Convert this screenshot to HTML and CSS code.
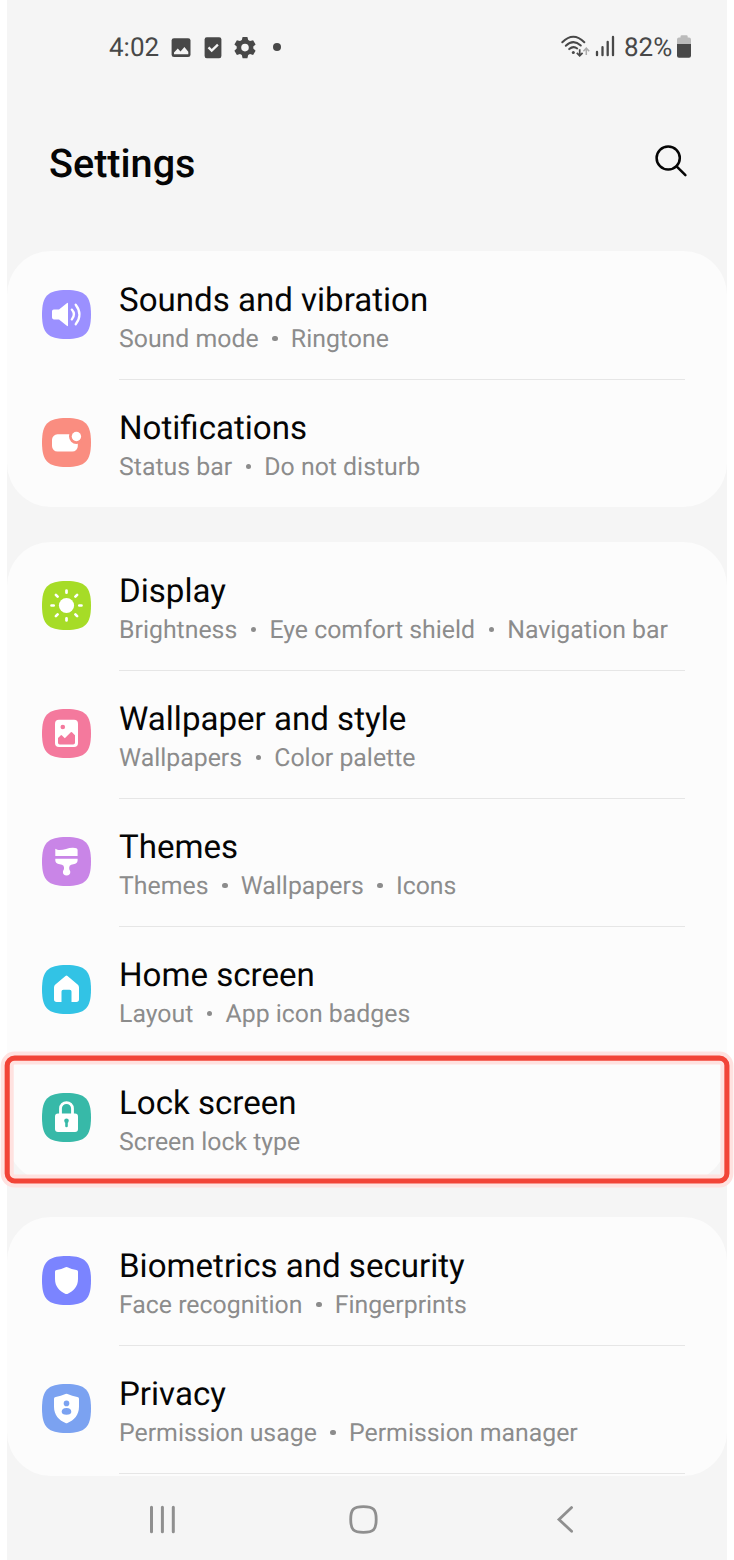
FILE: index.html
```html
<!DOCTYPE html>
<html lang="en">
<head>
<meta charset="utf-8">
<title>Settings</title>
<link rel="stylesheet" href="styles.css">
</head>
<body>
<svg class="defs" width="0" height="0" aria-hidden="true"><defs><path id="squircle" d="M0 24.5C0 6 6 0 24.5 0S49 6 49 24.5 43 49 24.5 49 0 43 0 24.5Z"/></defs></svg>
<div class="phone">
  <header class="status">
    <span class="clock">4:02</span>
    <svg class="status-left" width="116" height="30" viewBox="168 33 116 30">
      <rect x="171.6" y="38.2" width="18.9" height="18.9" rx="2.4" fill="#484848"/>
      <path d="M174 54.2V52.6L177.8 48.6 180.5 51.4 184.4 47 188.3 51.8V54.2Z" fill="#f5f5f5"/>
      <rect x="204.6" y="37.3" width="16.8" height="21" rx="2.2" fill="#484848"/>
      <path d="M208.5 47.4L211.7 50.6 217.9 44.6" fill="none" stroke="#f5f5f5" stroke-width="2.3"/>
      <path fill="#484848" fill-rule="evenodd" d="M242.6 37h4.8l.8 3.1 1.8 1 3.1-.9 2.5 4.2-2.3 2.2v2l2.3 2.2-2.5 4.2-3.1-.9-1.8 1-.8 3.2h-4.8l-.8-3.2-1.8-1-3.1.9-2.5-4.2 2.3-2.2v-2l-2.3-2.2 2.5-4.2 3.1.9 1.8-1ZM245 43.8a3.8 3.8 0 1 0 0 7.6 3.8 3.8 0 0 0 0-7.6Z"/>
      <circle cx="277" cy="47" r="4" fill="#484848"/>
    </svg>
    <svg class="status-net" width="58" height="30" viewBox="560 33 58 30" fill="none">
      <g stroke="#484848" stroke-width="2" stroke-linecap="round">
        <path d="M562.3 42.2Q573.3 31.2 584.3 42.2"/>
        <path d="M565.8 45.7Q573.3 38.6 580.8 45.5"/>
        <path d="M569.2 49.1Q573.3 45.5 577.2 48.5"/>
      </g>
      <circle cx="573.3" cy="52.4" r="1.5" fill="#484848"/>
      <path d="M579.7 49.2V55.6M576.8 52.9L579.7 55.9 582.6 52.9" stroke="#484848" stroke-width="1.7"/>
      <path d="M586.3 55V48.6M583.4 51.2L586.3 48.2 589.2 51.2" stroke="#aaa" stroke-width="1.5"/>
      <path d="M597 52V55.2M602.5 47.2V55.2M607.7 41.8V55.2M613 36.9V55.2" stroke="#484848" stroke-width="2.3" stroke-linecap="round"/>
    </svg>
    <span class="percent">82%</span>
    <svg class="battery" width="16" height="30" viewBox="676 33 16 30">
      <path d="M680.5 37.5v-1q0-1.3 1.3-1.3h4.6q1.3 0 1.3 1.3v1h1.3q2 0 2 2V44h-14v-4.5q0-2 2-2Z" fill="#bbb"/>
      <path d="M677 44h14v11.7q0 2-2 2h-10q-2 0-2-2Z" fill="#484848"/>
    </svg>
  </header>

  <div class="titlebar">
    <h1>Settings</h1>
    <svg width="36" height="36" viewBox="653 143 36 36" fill="none" stroke="#050505" stroke-width="2.5" stroke-linecap="round"><circle cx="668.2" cy="158" r="11.6"/><path d="M676.6 166.4L685.4 175.2"/></svg>
  </div>

  <main class="list">
    <section class="card">
      <div class="row">
        <svg class="icon" viewBox="0 0 49 49"><use href="#squircle" fill="#9b90ff"/><path d="M11.8 19.4H17L24.8 13.2Q26 12.3 26 13.8V35.2Q26 36.7 24.8 35.8L17 29.4H11.8Q10 29.4 10 27.6V21.2Q10 19.4 11.8 19.4Z" fill="#fff"/><path d="M29.8 19.6Q34.2 24.5 29.8 29.4M33.7 14.7Q41.2 24.5 33.7 34.3" fill="none" stroke="#fff" stroke-width="2.3" stroke-linecap="round"/></svg>
        <div class="text"><div class="name">Sounds and vibration</div><div class="sub"><span>Sound mode</span><i></i><span>Ringtone</span></div></div>
      </div>
      <div class="row">
        <svg class="icon" viewBox="0 0 49 49"><use href="#squircle" fill="#fa8d80"/><rect x="10" y="16.3" width="25.8" height="17.2" rx="5.5" fill="#fff"/><circle cx="34.4" cy="18.5" r="7.4" fill="#fa8d80"/><circle cx="34.4" cy="18.5" r="4.7" fill="#fff"/></svg>
        <div class="text"><div class="name">Notifications</div><div class="sub"><span>Status bar</span><i></i><span>Do not disturb</span></div></div>
      </div>
    </section>

    <section class="card">
      <div class="row">
        <svg class="icon" viewBox="0 0 49 49"><use href="#squircle" fill="#a6dc27"/><circle cx="24.5" cy="24.5" r="7.6" fill="#fff"/><path d="M24.5 9.5V11.7M24.5 37.3V39.5M9.5 24.5H11.7M37.3 24.5H39.5M13.9 13.9L15.6 15.6M33.4 33.4L35.1 35.1M13.9 35.1L15.6 33.4M33.4 15.6L35.1 13.9" stroke="#fff" stroke-width="2.7" stroke-linecap="round"/></svg>
        <div class="text"><div class="name">Display</div><div class="sub"><span>Brightness</span><i></i><span>Eye comfort shield</span><i></i><span>Navigation bar</span></div></div>
      </div>
      <div class="row">
        <svg class="icon" viewBox="0 0 49 49"><use href="#squircle" fill="#f4799d"/><rect x="13" y="10.7" width="23" height="27.2" rx="4" fill="#fff"/><circle cx="20.8" cy="18" r="2.3" fill="#f4799d"/><path d="M16 29L18.6 26.4Q19.3 25.7 20 26.4L22.8 29.2 28.8 23.2Q29.4 22.6 30 23.2L33 26.2V33.8Q33 35.6 31.2 35.6H17.8Q16 35.6 16 33.8Z" fill="#f4799d"/></svg>
        <div class="text"><div class="name">Wallpaper and style</div><div class="sub"><span>Wallpapers</span><i></i><span>Color palette</span></div></div>
      </div>
      <div class="row">
        <svg class="icon" viewBox="0 0 49 49"><use href="#squircle" fill="#c985e7"/><path d="M13.3 19V11.8C18.5 15.2 25 10.5 31 10.7Q35.6 10.8 35.6 13V19Z" fill="#fff"/><path d="M13.3 21.8H35.6V23.6Q35.4 26.4 32.4 27L29.2 27.7Q27.2 28.4 27.2 30.5V31.5C27.2 33 28.3 33.6 28.3 35.1A3.6 3.4 0 0 1 20.9 35.1C20.9 33.6 22 33 22 31.5V30.5Q22 28.4 20 27.7L16.6 27Q13.5 26.4 13.3 23.6Z" fill="#fff"/></svg>
        <div class="text"><div class="name">Themes</div><div class="sub"><span>Themes</span><i></i><span>Wallpapers</span><i></i><span>Icons</span></div></div>
      </div>
      <div class="row">
        <svg class="icon" viewBox="0 0 49 49"><use href="#squircle" fill="#32c3e5"/><path d="M23.5 11.1Q24.5 10.1 25.5 11.1L35.6 19.5Q37 20.7 37 22.5V34.3Q37 37 34.3 37H29.5V26.6Q29.5 24.7 27.6 24.7H21.4Q19.5 24.7 19.5 26.6V37H14.7Q12 37 12 34.3V22.5Q12 20.7 13.4 19.5Z" fill="#fff"/></svg>
        <div class="text"><div class="name">Home screen</div><div class="sub"><span>Layout</span><i></i><span>App icon badges</span></div></div>
      </div>
      <div class="row selected">
        <svg class="icon" viewBox="0 0 49 49"><use href="#squircle" fill="#37b9a8"/><rect x="13" y="20.4" width="23" height="18.7" rx="3" fill="#fff"/><path d="M18.5 22V15.6A6 6 0 0 1 30.5 15.6V22" fill="none" stroke="#fff" stroke-width="2.8"/><circle cx="24.5" cy="27.7" r="2.3" fill="#37b9a8"/><path d="M24.5 28V33" stroke="#37b9a8" stroke-width="2.6" stroke-linecap="round"/></svg>
        <div class="text"><div class="name">Lock screen</div><div class="sub"><span>Screen lock type</span></div></div>
        <svg class="outline" width="734" height="138" viewBox="0 1050 734 138" fill="none"><rect x="7.2" y="1058.1" width="719.7" height="122.9" rx="7.5" stroke="#ffe2e0" stroke-width="13"/><rect x="7.2" y="1058.1" width="719.7" height="122.9" rx="7.5" stroke="#f24437" stroke-width="5.1"/></svg>
      </div>
    </section>

    <section class="card clipped">
      <div class="row">
        <svg class="icon" viewBox="0 0 49 49"><use href="#squircle" fill="#7b84ff"/><path d="M23.6 11.3Q24.5 10.8 25.4 11.3 29.6 13.4 34.4 13.9 36 14.1 36 15.7V23C36 30.5 31.5 35.3 25.4 37.9Q24.5 38.3 23.6 37.9C17.5 35.3 13 30.5 13 23V15.7Q13 14.1 14.6 13.9 19.4 13.4 23.6 11.3Z" fill="#fff"/></svg>
        <div class="text"><div class="name">Biometrics and security</div><div class="sub"><span>Face recognition</span><i></i><span>Fingerprints</span></div></div>
      </div>
      <div class="row">
        <svg class="icon" viewBox="0 0 49 49"><use href="#squircle" fill="#7ba2f1"/><path d="M23.5 10.1Q24.5 9.6 25.5 10.1 30.1 12.4 35.3 12.9 37 13.1 37 14.8V22.8C37 31 32.1 36.2 25.5 39Q24.5 39.4 23.5 39C16.9 36.2 12 31 12 22.8V14.8Q12 13.1 13.7 12.9 18.9 12.4 23.5 10.1Z" fill="#fff"/><circle cx="24.5" cy="19.4" r="2.8" fill="#7ba2f1"/><path d="M19.7 27.8Q19.7 24 24.5 24T29.3 27.8Q29.3 30.7 24.5 30.7T19.7 27.8Z" fill="#7ba2f1"/></svg>
        <div class="text"><div class="name">Privacy</div><div class="sub"><span>Permission usage</span><i></i><span>Permission manager</span></div></div>
      </div>
      <div class="row next"></div>
    </section>
  </main>

  <nav class="navbar">
    <svg width="30" height="32" viewBox="148 1504 30 32" stroke="#8f8f8f" stroke-width="3" stroke-linecap="round"><path d="M151.5 1507.3V1531.7M162.4 1507.3V1531.7M173.3 1507.3V1531.7"/></svg>
    <svg class="home" width="32" height="32" viewBox="347 1504 32 32" fill="none" stroke="#8f8f8f" stroke-width="2.8"><path d="M350.7 1519.5C350.7 1509.5 353.4 1506.7 363.4 1506.7S376.2 1509.5 376.2 1519.5 373.4 1532.3 363.4 1532.3 350.7 1529.5 350.7 1519.5Z"/></svg>
    <svg width="20" height="32" viewBox="555 1504 20 32" fill="none" stroke="#8f8f8f" stroke-width="2.8" stroke-linecap="round"><path d="M571.6 1507.6L559 1519.5 571.6 1531.2"/></svg>
  </nav>
</div>
</body>
</html>
```
FILE: styles.css
```css
* { box-sizing: border-box; }
body {
  margin: 0;
  background: #fff;
  font-family: Roboto, sans-serif;
  text-rendering: geometricPrecision;
}
.defs { position: absolute; }
svg { display: block; flex: none; }
.phone {
  width: 720px;
  height: 1560px;
  margin-left: 7px;
  background: #f5f5f5;
  display: flex;
  flex-direction: column;
}
.status {
  height: 63px;
  padding: 33px 35px 0 102px;
  display: flex;
  flex: none;
  color: #484848;
  font-size: 26px;
  line-height: 30px;
}
.clock { width: 59px; }
.status-net { margin-left: auto; }
.percent { width: 52px; margin-left: 6px; white-space: nowrap; }
.battery { flex: none; }
.titlebar {
  height: 188px;
  padding: 80px 38px 0 42px;
  display: flex;
  flex: none;
  justify-content: space-between;
}
h1 {
  margin: 0;
  font-size: 39.6px;
  line-height: 42px;
  font-weight: 500;
  color: #050505;
}
.list {
  flex: none;
  height: 1225px;
  display: flex;
  flex-direction: column;
  gap: 35px;
}
.card {
  flex: none;
  background: #fcfcfc;
  border-radius: 44px;
}
.clipped { height: 259px; overflow: hidden; }
.row {
  height: 128px;
  padding: 0 42px 0 35px;
  display: flex;
  gap: 28px;
}
.icon { width: 49px; height: 49px; margin-top: 39px; }
.text { flex: 1; padding-top: 29px; white-space: nowrap; }
.row + .row .text, .next::after { box-shadow: inset 0 1px #e6e6e6; }
.next::after { content: ""; flex: 1; margin-left: 77px; }
.name {
  font-size: 33.1px;
  line-height: 42px;
  color: #050505;
}
.sub {
  display: flex;
  align-items: center;
  font-size: 24.85px;
  line-height: 36px;
  color: #8c8c8c;
}
.sub i {
  width: 5.6px;
  height: 5.6px;
  margin: 0 13px 3px 13.6px;
  border-radius: 50%;
  background: #8c8c8c;
}
.selected { position: relative; }
.row.selected .text { box-shadow: none; }
.outline { position: absolute; left: -7px; top: -4px; }
.navbar {
  flex: 1;
  padding: 28px 0 24px 141px;
  display: flex;
}
.home { margin: 0 176px 0 169px; }
```
